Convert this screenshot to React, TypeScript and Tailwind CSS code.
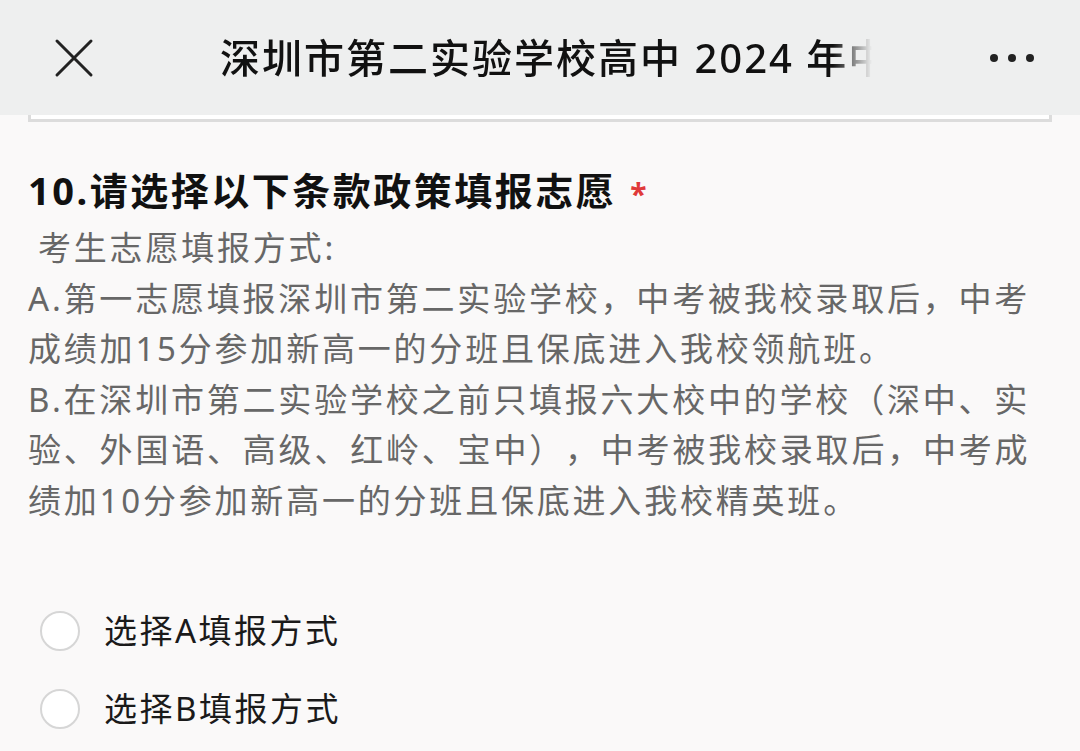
import React from 'react';

const font = { fontFamily: '"Noto Sans", "Noto Sans CJK SC", sans-serif' };

const options = ['选择A填报方式', '选择B填报方式'];

function CloseIcon() {
  return (
    <svg width="40" height="40" viewBox="0 0 40 40" fill="none" stroke="#222" strokeWidth="3" strokeLinecap="round">
      <path d="M3 3 L37 37 M37 3 L3 37" />
    </svg>
  );
}

export default function App() {
  return (
    <div className="min-h-[751px] w-[1080px] bg-[#faf9f9] overflow-hidden [text-spacing-trim:space-all]" style={font}>
      <header className="h-[115px] bg-[#eeefef] flex items-center pl-[54px] pr-[46px]">
        <CloseIcon />
        <div className="ml-[126px] w-[652px] overflow-hidden whitespace-nowrap [mask-image:linear-gradient(to_right,black_94%,transparent)]">
          <span className="text-[40px] font-medium tracking-[2px] text-[#111]">深圳市第二实验学校高中 2024 年中考志愿填报意向调查</span>
        </div>
        <div className="ml-auto flex items-center gap-[10px]">
          <span className="w-[8px] h-[8px] rounded-full bg-[#222]" />
          <span className="w-[8px] h-[8px] rounded-full bg-[#222]" />
          <span className="w-[8px] h-[8px] rounded-full bg-[#222]" />
        </div>
      </header>

      <div className="mx-[28px] h-[7px] bg-white border-x-[3px] border-b-[3px] border-[#dcdcdc]" />

      <section className="px-[28px] pt-[45px]">
        <h2 className="text-[38px] leading-[46px] font-bold tracking-[2.5px] text-[#111]">
          10.请选择以下条款政策填报志愿
          <span className="ml-[14px] text-[#e03a3a] text-[30px]">*</span>
        </h2>
        <div className="mt-[6px] text-[33px] leading-[50.5px] tracking-[2.8px] text-[#676767]">
          <p className="pl-[10px]">考生志愿填报方式:</p>
          <p>A.第一志愿填报深圳市第二实验学校，中考被我校录取后，中考成绩加15分参加新高一的分班且保底进入我校领航班。</p>
          <p>B.在深圳市第二实验学校之前只填报六大校中的学校（深中、实验、外国语、高级、红岭、宝中），中考被我校录取后，中考成绩加10分参加新高一的分班且保底进入我校精英班。</p>
        </div>

        <div className="mt-[66px] flex flex-col">
          {options.map((o) => (
            <label key={o} className="h-[78px] flex items-center gap-[24px] pl-[12px]">
              <span className="w-[40px] h-[40px] rounded-full border-2 border-[#d6d6d6] bg-white" />
              <span className="text-[33px] tracking-[2.5px] text-[#1a1a1a]">{o}</span>
            </label>
          ))}
        </div>
      </section>
    </div>
  );
}
